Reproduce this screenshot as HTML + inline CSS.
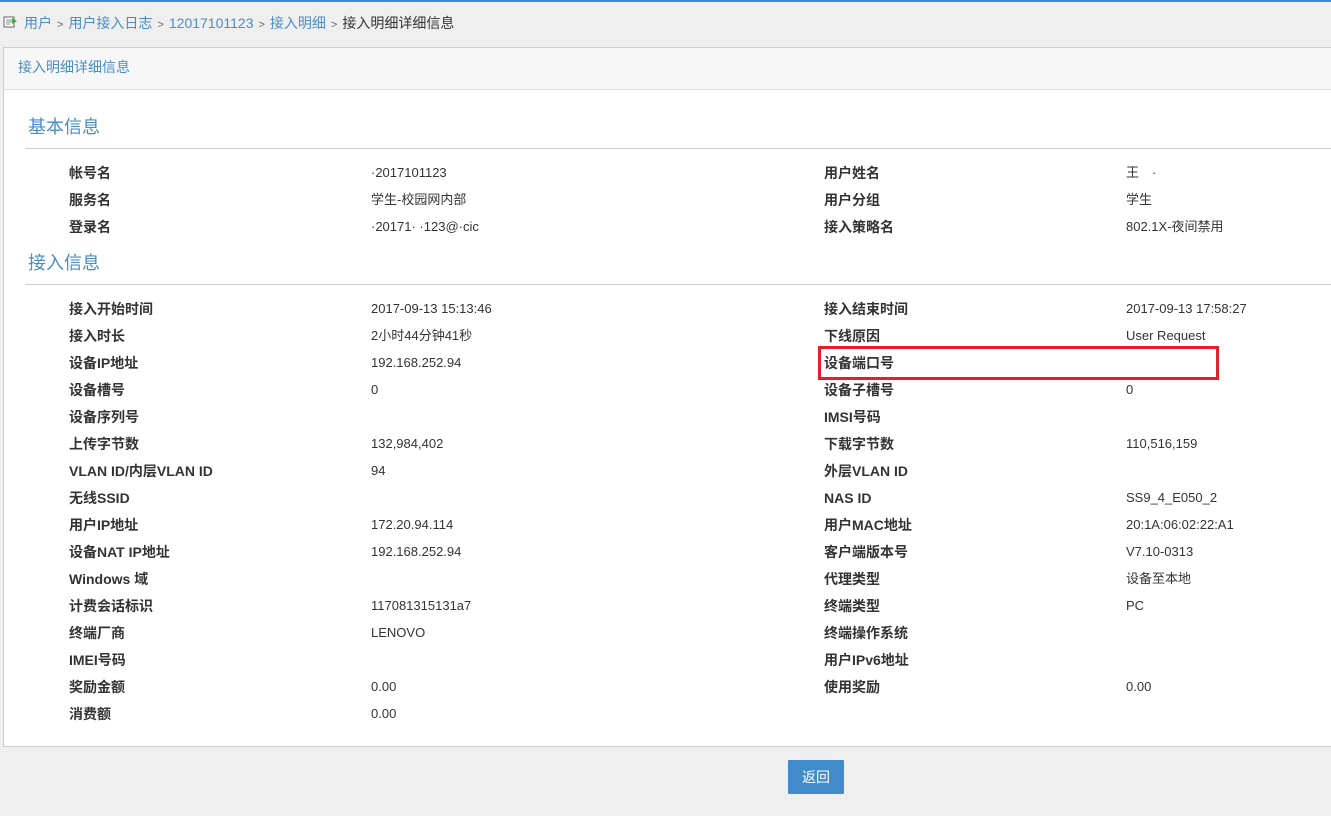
<!DOCTYPE html>
<html><head><meta charset="utf-8"><style>
body{margin:0;width:1331px;height:816px;background:#efefef;font-family:"Liberation Sans","Noto Sans CJK SC",sans-serif;position:relative;overflow:hidden;color:#333}
.top{position:absolute;left:0;top:0;width:1331px;height:2px;background:#3a8ad6}
.bc{position:absolute;left:24px;top:13px;font-size:14px;color:#333}
.bc a{color:#4a8cc4}
.bc .s{color:#666;font-size:11px;margin:0 5px}
.icon{position:absolute;left:3px;top:15px;width:16px;height:14px}
.panel{position:absolute;left:3px;top:47px;width:1330px;height:700px;background:#fff;border:1px solid #ccc;box-sizing:border-box}
.ph{height:41px;background:#f7f7f7;border-bottom:1px solid #ddd;color:#4a8cc4;font-size:14px;line-height:39px;padding-left:14px}
.h{position:absolute;left:24px;font-size:18px;color:#4a8cc4}
.line{position:absolute;left:21px;right:0;height:1px;background:#ccc}
.r{position:absolute;font-size:14px;line-height:18px;white-space:nowrap}
.l{font-weight:bold;color:#333}
.v{font-size:13px;color:#333}
.red{position:absolute;left:818px;top:346px;width:401px;height:34px;border:3px solid #e0202e;box-sizing:border-box}
.btn{position:absolute;left:788px;top:760px;width:56px;height:34px;background:#428bca;color:#fff;font-size:14px;text-align:center;line-height:34px;border-radius:1px}
</style></head><body>
<div class="top"></div>
<svg class="icon" viewBox="0 0 16 14"><rect x="1" y="2" width="10" height="10" fill="#fff" stroke="#666"/><path d="M3 5h6M3 7h6M3 9h4" stroke="#888"/><path d="M9 3l5 3-5 3z" fill="#4a4"/></svg>
<div class="bc"><a>用户</a><span class="s">&gt;</span><a>用户接入日志</a><span class="s">&gt;</span><a>12017101123</a><span class="s">&gt;</span><a>接入明细</a><span class="s">&gt;</span>接入明细详细信息</div>
<div class="panel"><div class="ph">接入明细详细信息</div>
<div class="h" style="top:65px">基本信息</div><div class="line" style="top:100px"></div>
<div class="h" style="top:201px">接入信息</div><div class="line" style="top:236px"></div>
</div>
<div id="rows"></div>
<div class="red"></div>
<div class="btn">返回</div>
<script>
var d=[[173,"帐号名","·2017101123","用户姓名","王　·"],[200,"服务名","学生-校园网内部","用户分组","学生"],[227,"登录名","·20171·  ·123@·cic","接入策略名","802.1X-夜间禁用"],
[309,"接入开始时间","2017-09-13 15:13:46","接入结束时间","2017-09-13 17:58:27"],[336,"接入时长","2小时44分钟41秒","下线原因","User Request"],[363,"设备IP地址","192.168.252.94","设备端口号",""],[390,"设备槽号","0","设备子槽号","0"],[417,"设备序列号","","IMSI号码",""],[444,"上传字节数","132,984,402","下载字节数","110,516,159"],[471,"VLAN ID/内层VLAN ID","94","外层VLAN ID",""],[498,"无线SSID","","NAS ID","SS9_4_E050_2"],[525,"用户IP地址","172.20.94.114","用户MAC地址","20:1A:06:02:22:A1"],[552,"设备NAT IP地址","192.168.252.94","客户端版本号","V7.10-0313"],[579,"Windows 域","","代理类型","设备至本地"],[606,"计费会话标识","117081315131a7","终端类型","PC"],[633,"终端厂商","LENOVO","终端操作系统",""],[660,"IMEI号码","","用户IPv6地址",""],[687,"奖励金额","0.00","使用奖励","0.00"],[714,"消费额","0.00","",""]];
var h="";d.forEach(function(r){var t=r[0]-9;h+='<div class="r l" style="left:69px;top:'+t+'px">'+r[1]+'</div><div class="r v" style="left:371px;top:'+t+'px">'+r[2]+'</div><div class="r l" style="left:824px;top:'+t+'px">'+r[3]+'</div><div class="r v" style="left:1126px;top:'+t+'px">'+r[4]+'</div>';});
document.getElementById("rows").innerHTML=h;
</script>
</body></html>
